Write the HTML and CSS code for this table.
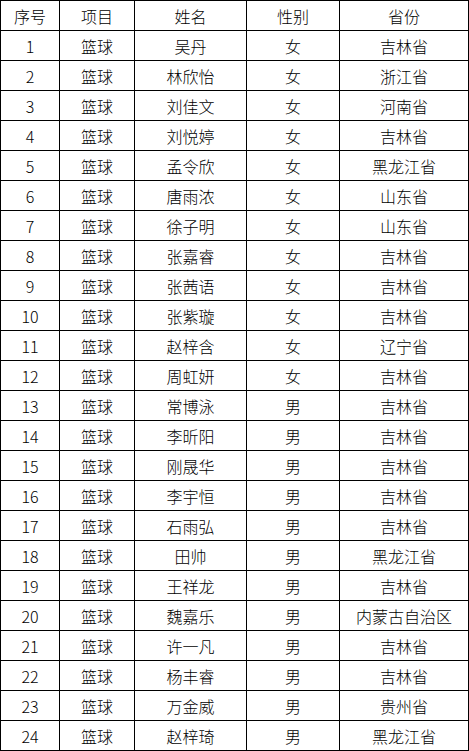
FILE: index.html
```html
<!DOCTYPE html>
<html lang="zh-CN">
<head>
<meta charset="utf-8">
<title>名单</title>
<link rel="stylesheet" href="styles.css">
</head>
<body>
<table class="roster">
<colgroup>
<col class="c-no"><col class="c-sport"><col class="c-name"><col class="c-sex"><col class="c-prov">
</colgroup>
<thead>
<tr><th>序号</th><th>项目</th><th>姓名</th><th>性别</th><th>省份</th></tr>
</thead>
<tbody>
<tr><td>1</td><td>篮球</td><td>吴丹</td><td>女</td><td>吉林省</td></tr>
<tr><td>2</td><td>篮球</td><td>林欣怡</td><td>女</td><td>浙江省</td></tr>
<tr><td>3</td><td>篮球</td><td>刘佳文</td><td>女</td><td>河南省</td></tr>
<tr><td>4</td><td>篮球</td><td>刘悦婷</td><td>女</td><td>吉林省</td></tr>
<tr><td>5</td><td>篮球</td><td>孟令欣</td><td>女</td><td>黑龙江省</td></tr>
<tr><td>6</td><td>篮球</td><td>唐雨浓</td><td>女</td><td>山东省</td></tr>
<tr><td>7</td><td>篮球</td><td>徐子明</td><td>女</td><td>山东省</td></tr>
<tr><td>8</td><td>篮球</td><td>张嘉睿</td><td>女</td><td>吉林省</td></tr>
<tr><td>9</td><td>篮球</td><td>张茜语</td><td>女</td><td>吉林省</td></tr>
<tr><td>10</td><td>篮球</td><td>张紫璇</td><td>女</td><td>吉林省</td></tr>
<tr><td>11</td><td>篮球</td><td>赵梓含</td><td>女</td><td>辽宁省</td></tr>
<tr><td>12</td><td>篮球</td><td>周虹妍</td><td>女</td><td>吉林省</td></tr>
<tr><td>13</td><td>篮球</td><td>常博泳</td><td>男</td><td>吉林省</td></tr>
<tr><td>14</td><td>篮球</td><td>李昕阳</td><td>男</td><td>吉林省</td></tr>
<tr><td>15</td><td>篮球</td><td>刚晟华</td><td>男</td><td>吉林省</td></tr>
<tr><td>16</td><td>篮球</td><td>李宇恒</td><td>男</td><td>吉林省</td></tr>
<tr><td>17</td><td>篮球</td><td>石雨弘</td><td>男</td><td>吉林省</td></tr>
<tr><td>18</td><td>篮球</td><td>田帅</td><td>男</td><td>黑龙江省</td></tr>
<tr><td>19</td><td>篮球</td><td>王祥龙</td><td>男</td><td>吉林省</td></tr>
<tr><td>20</td><td>篮球</td><td>魏嘉乐</td><td>男</td><td>内蒙古自治区</td></tr>
<tr><td>21</td><td>篮球</td><td>许一凡</td><td>男</td><td>吉林省</td></tr>
<tr><td>22</td><td>篮球</td><td>杨丰睿</td><td>男</td><td>吉林省</td></tr>
<tr><td>23</td><td>篮球</td><td>万金威</td><td>男</td><td>贵州省</td></tr>
<tr><td>24</td><td>篮球</td><td>赵梓琦</td><td>男</td><td>黑龙江省</td></tr>
</tbody>
</table>
</body>
</html>
```
FILE: styles.css
```css
html, body {
  margin: 0;
  padding: 0;
  background: #ffffff;
}
.roster {
  border-collapse: collapse;
  table-layout: fixed;
  width: 468px;
  font-family: "Noto Sans CJK SC", "DejaVu Sans", sans-serif;
  font-size: 16px;
  font-weight: 300;
  color: #000000;
}
.c-no { width: 59px; }
.c-sport { width: 75px; }
.c-name { width: 112px; }
.c-sex { width: 93px; }
.c-prov { width: 129px; }
.roster th,
.roster td {
  border: 1px solid #000000;
  height: 29px;
  padding: 0;
  text-align: center;
  vertical-align: middle;
  font-weight: 300;
  line-height: 18px;
  white-space: nowrap;
}
```
